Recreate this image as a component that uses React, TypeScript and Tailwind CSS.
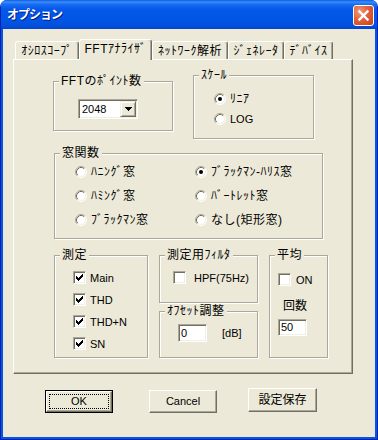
import React from "react";

const SUNKEN =
  "bg-white border border-t-[#ACA899] border-l-[#ACA899] border-r-white border-b-white shadow-[inset_1px_1px_0_#716F64,inset_-1px_-1px_0_#F1EFE2]";

function Group({
  label,
  className,
  children,
}: {
  label: string;
  className: string;
  children?: React.ReactNode;
}) {
  return (
    <div
      className={`relative border border-[#ACA899] shadow-[inset_1px_1px_0_#fff,1px_1px_0_#fff] ${className}`}
    >
      <span className="absolute left-[5px] top-[-8px] px-[2px] bg-[#ECE9D8] text-[12px] leading-[15px] tracking-[0.5px] whitespace-nowrap">
        {label}
      </span>
      {children}
    </div>
  );
}

function Radio({ checked = false }: { checked?: boolean }) {
  return (
    <svg width="12" height="12" viewBox="0 0 12 12" className="block shrink-0">
      <circle cx="6" cy="6" r="5" fill="#fff" />
      <path d="M2.11 9.89A5.5 5.5 0 0 1 9.89 2.11" fill="none" stroke="#ACA899" />
      <path d="M9.89 2.11A5.5 5.5 0 0 1 2.11 9.89" fill="none" stroke="#fff" />
      <path d="M2.82 9.18A4.5 4.5 0 0 1 9.18 2.82" fill="none" stroke="#716F64" />
      <path d="M9.18 2.82A4.5 4.5 0 0 1 2.82 9.18" fill="none" stroke="#F1EFE2" />
      {checked && <circle cx="6" cy="6" r="2" fill="#000" />}
    </svg>
  );
}

function Check({ checked = false }: { checked?: boolean }) {
  return (
    <div className={`w-[13px] h-[13px] shrink-0 flex items-center justify-center ${SUNKEN}`}>
      {checked && (
        <svg width="7" height="7" viewBox="0 0 7 7" shapeRendering="crispEdges" className="block">
          <rect x="6" y="0" width="1" height="1" fill="#000" />
          <rect x="5" y="1" width="2" height="1" fill="#000" />
          <rect x="0" y="2" width="1" height="1" fill="#000" />
          <rect x="4" y="2" width="3" height="1" fill="#000" />
          <rect x="0" y="3" width="2" height="1" fill="#000" />
          <rect x="3" y="3" width="3" height="1" fill="#000" />
          <rect x="0" y="4" width="5" height="1" fill="#000" />
          <rect x="1" y="5" width="3" height="1" fill="#000" />
          <rect x="2" y="6" width="1" height="1" fill="#000" />
        </svg>
      )}
    </div>
  );
}

function RadioRow({
  label,
  checked,
  latin,
}: {
  label: string;
  checked?: boolean;
  latin?: boolean;
}) {
  return (
    <div className="h-[12px] flex items-center gap-[4px]">
      <Radio checked={checked} />
      <span
        className={`whitespace-nowrap ${
          latin ? "text-[11px]" : "text-[12px] tracking-[0.5px]"
        } leading-[14px]`}
      >
        {label}
      </span>
    </div>
  );
}

function CheckRow({
  label,
  checked,
  gap,
}: {
  label: string;
  checked?: boolean;
  gap: string;
}) {
  return (
    <div className={`h-[13px] flex items-center ${gap}`}>
      <Check checked={checked} />
      <span className="text-[11px] leading-[14px] whitespace-nowrap">{label}</span>
    </div>
  );
}

function Tab({
  label,
  w,
  selected,
}: {
  label: string;
  w: string;
  selected?: boolean;
}) {
  return (
    <div
      className={`${w} ${
        selected ? "h-[21px] -mb-px relative z-10 pb-[2px]" : "h-[18px]"
      } shrink-0 flex items-center justify-center bg-[#ECE9D8] border-t border-l border-r border-t-white border-l-white border-r-[#716F64] rounded-t-[3px] shadow-[inset_-1px_0_0_#ACA899] text-[12px] leading-[14px] tracking-[0.5px] whitespace-nowrap`}
    >
      {label}
    </div>
  );
}

function Button({
  label,
  isDefault,
  className,
  textClass,
}: {
  label: string;
  isDefault?: boolean;
  className: string;
  textClass: string;
}) {
  if (isDefault) {
    return (
      <div className={`${className} border border-black`}>
        <div className="w-full h-full flex items-center justify-center bg-[#ECE9D8] border border-t-white border-l-white border-r-[#716F64] border-b-[#716F64] shadow-[inset_-1px_-1px_0_#ACA899] p-[2px]">
          <div className="w-full h-full flex items-center justify-center border border-dotted border-black">
            <span className={textClass}>{label}</span>
          </div>
        </div>
      </div>
    );
  }
  return (
    <div
      className={`${className} flex items-center justify-center bg-[#ECE9D8] border border-t-white border-l-white border-r-[#716F64] border-b-[#716F64] shadow-[inset_-1px_-1px_0_#ACA899]`}
    >
      <span className={textClass}>{label}</span>
    </div>
  );
}

export default function App() {
  return (
    <div className="w-[378px] h-[440px] bg-white font-['Liberation_Sans','Noto_Sans_CJK_JP',sans-serif] text-black">
      <div className="w-[378px] h-[440px] flex flex-col rounded-t-[7px] overflow-hidden bg-[#0020B8] px-px pb-px">
        {/* Title bar */}
        <div className="h-[29px] shrink-0 flex items-start justify-between pl-[6px] pr-[3px] bg-[linear-gradient(to_bottom,#0A5EEA_0%,#3C8EF8_7%,#1C6EF2_14%,#0458EA_32%,#0055E5_70%,#0250DA_90%,#0542CC_100%)]">
          <span className="mt-[7px] text-white font-bold text-[12px] leading-[16px] tracking-[-1px] [text-shadow:1px_1px_0_#0A1883]">
            オプション
          </span>
          <div className="mt-[5px] w-[21px] h-[21px] rounded-[3px] border border-white bg-[radial-gradient(circle_at_30%_30%,#F39A7C_0%,#E2603A_45%,#C9401A_100%)] flex items-center justify-center">
            <svg width="19" height="19" viewBox="0 0 19 19" className="block">
              <path d="M5.5 5.5L13.5 13.5M13.5 5.5L5.5 13.5" stroke="#fff" strokeWidth="2.4" strokeLinecap="square" />
            </svg>
          </div>
        </div>

        {/* Body */}
        <div className="flex-1 flex flex-col bg-[#ECE9D8] border-x-2 border-b-2 border-[#0855DD]">
          {/* Tabs */}
          <div className="mt-[10px] h-[20px] flex items-end pl-[12px]">
            <Tab label="ｵｼﾛｽｺｰﾌﾟ" w="w-[64px]" />
            <Tab label="FFTｱﾅﾗｲｻﾞ" w="w-[73px]" selected />
            <Tab label="ﾈｯﾄﾜｰｸ解析" w="w-[76px]" />
            <Tab label="ｼﾞｪﾈﾚｰﾀ" w="w-[56px]" />
            <Tab label="ﾃﾞﾊﾞｲｽ" w="w-[49px]" />
          </div>

          {/* Tab panel */}
          <div className="ml-[10px] w-[340px] h-[315px] border border-t-white border-l-white border-r-[#716F64] border-b-[#716F64] shadow-[inset_-1px_-1px_0_#ACA899]">
            {/* Row 1 */}
            <div className="flex items-start">
              <Group label="FFTのﾎﾟｲﾝﾄ数" className="ml-[39px] mt-[21px] w-[120px] h-[50px] pl-[24px] pt-[17px]">
                <div className={`w-[60px] h-[20px] flex items-center justify-between p-px ${SUNKEN}`}>
                  <span className="text-[11px] leading-[13px] pl-[2px]">2048</span>
                  <div className="w-[16px] h-[16px] flex items-center justify-center bg-[#ECE9D8] border border-t-[#F1EFE2] border-l-[#F1EFE2] border-r-[#716F64] border-b-[#716F64] shadow-[inset_1px_1px_0_#fff,inset_-1px_-1px_0_#ACA899]">
                    <svg width="7" height="4" viewBox="0 0 7 4" shapeRendering="crispEdges" className="block">
                      <rect x="0" y="0" width="7" height="1" fill="#000" />
                      <rect x="1" y="1" width="5" height="1" fill="#000" />
                      <rect x="2" y="2" width="3" height="1" fill="#000" />
                      <rect x="3" y="3" width="1" height="1" fill="#000" />
                    </svg>
                  </div>
                </div>
              </Group>
              <Group label="ｽｹｰﾙ" className="ml-[20px] mt-[15px] w-[121px] h-[64px] pl-[20px] pt-[17px]">
                <div className="flex flex-col gap-[8px]">
                  <RadioRow label="ﾘﾆｱ" checked />
                  <RadioRow label="LOG" latin />
                </div>
              </Group>
            </div>

            {/* Row 2 */}
            <Group label="窓関数" className="ml-[40px] mt-[14px] w-[269px] h-[86px] pl-[20px] pt-[12px]">
              <div className="grid grid-cols-[120px_120px] gap-y-[12px]">
                <RadioRow label="ﾊﾆﾝｸﾞ窓" />
                <RadioRow label="ﾌﾞﾗｯｸﾏﾝ-ﾊﾘｽ窓" checked />
                <RadioRow label="ﾊﾐﾝｸﾞ窓" />
                <RadioRow label="ﾊﾞｰﾄﾚｯﾄ窓" />
                <RadioRow label="ﾌﾞﾗｯｸﾏﾝ窓" />
                <RadioRow label="なし(矩形窓)" />
              </div>
            </Group>

            {/* Row 3 */}
            <div className="mt-[16px] flex items-start">
              <Group label="測定" className="ml-[40px] w-[94px] h-[103px] pl-[18px] pt-[15px]">
                <div className="flex flex-col gap-[9px]">
                  <CheckRow label="Main" checked gap="gap-[4px]" />
                  <CheckRow label="THD" checked gap="gap-[4px]" />
                  <CheckRow label="THD+N" checked gap="gap-[4px]" />
                  <CheckRow label="SN" checked gap="gap-[4px]" />
                </div>
              </Group>

              <div className="ml-[11px] w-[99px] flex flex-col">
                <Group label="測定用ﾌｨﾙﾀ" className="w-[99px] h-[48px] pl-[13px] pt-[15px]">
                  <CheckRow label="HPF(75Hz)" gap="gap-[8px]" />
                </Group>
                <Group label="ｵﾌｾｯﾄ調整" className="mt-[8px] w-[99px] h-[47px] pl-[18px] pt-[12px]">
                  <div className="flex items-center">
                    <div className={`w-[29px] h-[18px] flex items-center ${SUNKEN}`}>
                      <span className="text-[11px] leading-[13px] pl-[2px]">0</span>
                    </div>
                    <span className="ml-[15px] text-[11px] leading-[14px]">[dB]</span>
                  </div>
                </Group>
              </div>

              <Group label="平均" className="ml-[11px] w-[59px] h-[103px] pl-[8px] pt-[17px]">
                <CheckRow label="ON" gap="gap-[5px]" />
                <div className="mt-[13px] ml-[5px] text-[12px] leading-[14px]">回数</div>
                <div className={`mt-[6px] w-[29px] h-[17px] flex items-center ${SUNKEN}`}>
                  <span className="text-[11px] leading-[13px] pl-[2px]">50</span>
                </div>
              </Group>
            </div>
          </div>

          {/* Buttons */}
          <div className="mt-[14px] flex items-start">
            <Button
              label="OK"
              isDefault
              className="ml-[42px] mt-[2px] w-[68px] h-[23px]"
              textClass="text-[11px] leading-[13px]"
            />
            <Button
              label="Cancel"
              className="ml-[36px] mt-[2px] w-[68px] h-[23px]"
              textClass="text-[11px] leading-[13px]"
            />
            <Button
              label="設定保存"
              className="ml-[31px] w-[69px] h-[24px]"
              textClass="text-[12px] leading-[14px]"
            />
          </div>
        </div>
      </div>
    </div>
  );
}
